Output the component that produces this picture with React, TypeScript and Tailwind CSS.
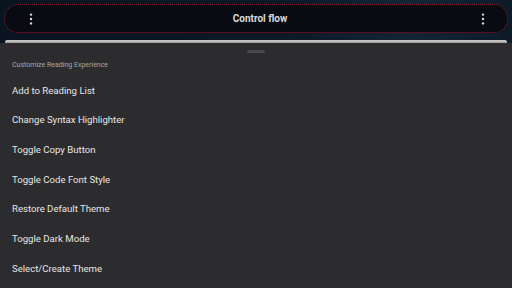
import { useState } from "react"

const actions = [
  "Add to Reading List",
  "Change Syntax Highlighter",
  "Toggle Copy Button",
  "Toggle Code Font Style",
  "Restore Default Theme",
  "Toggle Dark Mode",
  "Select/Create Theme",
]

function Kebab() {
  return (
    <svg width="4" height="12" viewBox="0 0 4 12" fill="#d8d8d8">
      <circle cx="2" cy="1.6" r="1.2" />
      <circle cx="2" cy="6" r="1.2" />
      <circle cx="2" cy="10.4" r="1.2" />
    </svg>
  )
}

export default function App() {
  const [picked, setPicked] = useState<string | null>(null)

  return (
    <div
      className="w-[512px] h-[288px] overflow-hidden flex flex-col bg-[linear-gradient(90deg,#0a1420_0%,#0c1826_55%,#142536_80%,#0d1a28_100%)]"
      style={{ fontFamily: "Roboto, 'Noto Sans', sans-serif" }}
    >
      <div className="px-[4px] pt-[4px]">
        <div className="h-[29px] rounded-[14px] bg-[#080b11] border border-dotted border-[#8e2233] flex items-center justify-between pl-[24px] pr-[22px]">
          <button className="w-[4px] flex items-center"><Kebab /></button>
          <span className="ml-[6px] text-[10px] font-bold text-[#dcdcdc]">Control flow</span>
          <button className="w-[4px] flex items-center"><Kebab /></button>
        </div>
      </div>
      <div className="mt-[7px] mx-[5px] h-[3px] rounded-t-[2px] bg-[linear-gradient(180deg,#d0d0d0,#9a9a9a)]" />
      <div className="flex-1 bg-[#2c2c2e] flex flex-col">
        <div className="pt-[7px] flex justify-center">
          <div className="w-[18px] h-[3px] rounded-full bg-[#4a4a4c]" />
        </div>
        <div className="mt-[7px] px-[12px] h-[10px] leading-[10px] text-[7px] text-[#a8a8a8]">
          Customize Reading Experience
        </div>
        <ul className="mt-[6px] flex flex-col">
          {actions.map((a) => (
            <li
              key={a}
              onClick={() => setPicked(a)}
              className={`h-[29.7px] px-[12px] flex items-center text-[9.6px] text-[#e6e6e6] ${picked === a ? "bg-[#3a3a3c]" : ""}`}
            >
              {a}
            </li>
          ))}
        </ul>
      </div>
    </div>
  )
}
